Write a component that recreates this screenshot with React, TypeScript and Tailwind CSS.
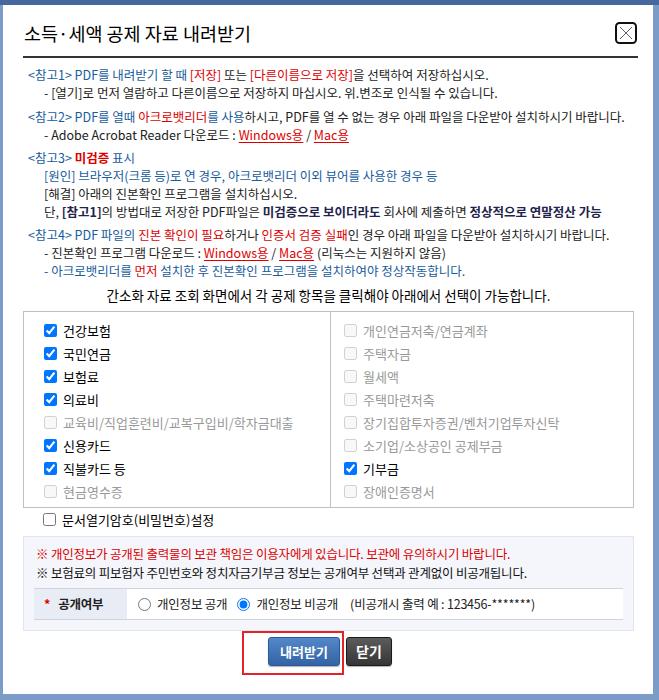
import React from 'react';

const Blue: React.FC<{ children: React.ReactNode }> = ({ children }) => (
  <span className="text-[#175c9d]">{children}</span>
);

const Red: React.FC<{ children: React.ReactNode; bold?: boolean }> = ({ children, bold }) => (
  <span className={`text-[#dd0000] ${bold ? 'font-bold' : ''}`}>{children}</span>
);

const Strong: React.FC<{ children: React.ReactNode }> = ({ children }) => (
  <span className="font-bold text-[#22224a]">{children}</span>
);

const DownLink: React.FC<{ children: React.ReactNode }> = ({ children }) => (
  <a href="#" className="text-[#dd0000] underline underline-offset-2">{children}</a>
);

const CloseIcon = () => (
  <svg width="22" height="22" viewBox="0 0 22 22">
    <rect x="1" y="1" width="20" height="20" rx="3.5" fill="white" stroke="#111" strokeWidth="2" />
    <path d="M5 5L17 17M17 5L5 17" stroke="#5a5f7a" strokeWidth="1" />
  </svg>
);

type Item = { label: string; checked?: boolean; disabled?: boolean };

const leftItems: Item[] = [
  { label: '건강보험', checked: true },
  { label: '국민연금', checked: true },
  { label: '보험료', checked: true },
  { label: '의료비', checked: true },
  { label: '교육비/직업훈련비/교복구입비/학자금대출', disabled: true },
  { label: '신용카드', checked: true },
  { label: '직불카드 등', checked: true },
  { label: '현금영수증', disabled: true },
];

const rightItems: Item[] = [
  { label: '개인연금저축/연금계좌', disabled: true },
  { label: '주택자금', disabled: true },
  { label: '월세액', disabled: true },
  { label: '주택마련저축', disabled: true },
  { label: '장기집합투자증권/벤처기업투자신탁', disabled: true },
  { label: '소기업/소상공인 공제부금', disabled: true },
  { label: '기부금', checked: true },
  { label: '장애인증명서', disabled: true },
];

const CheckRow: React.FC<{ item: Item }> = ({ item }) => (
  <label className="flex items-center gap-[6px] h-[23px]">
    <input
      type="checkbox"
      defaultChecked={item.checked}
      disabled={item.disabled}
      className="m-0 w-[13px] h-[13px] shrink-0"
    />
    <span className={item.disabled ? 'text-[#999]' : 'text-black'}>{item.label}</span>
  </label>
);

export default function App() {
  return (
    <div className="h-[700px] bg-[#7b9bc8] border-t-[5px] border-[#45699f] pl-[3px] pr-[6px] font-['Noto_Sans_CJK_KR','Noto_Sans',sans-serif]">
      <div className="bg-white h-[689px]">
        {/* header */}
        <div className="ml-[20px] mr-[15px] h-[53px] pt-[5px] border-b-2 border-[#333] flex items-center justify-between">
          <h1 className="pl-[1px] text-[18.5px] leading-none text-black">소득·세액 공제 자료 내려받기</h1>
          <button className="mr-[1px]" aria-label="닫기">
            <CloseIcon />
          </button>
        </div>

        {/* notes */}
        <div className="pl-[25px] pt-[8px] text-[12.5px] leading-[18px] text-[#222] whitespace-nowrap">
          <div>
            <p>
              <Blue>&lt;참고1&gt; PDF를 내려받기 할 때 </Blue><Red>[저장]</Red> 또는 <Red>[다른이름으로 저장]</Red>을 선택하여 저장하십시오.
            </p>
            <p className="pl-[16px]">- [열기]로 먼저 열람하고 다른이름으로 저장하지 마십시오. 위.변조로 인식될 수 있습니다.</p>
          </div>
          <div className="mt-[6px]">
            <p>
              <Blue>&lt;참고2&gt; PDF를 열때 </Blue><Red>아크로뱃리더</Red><Blue>를 사용</Blue>하시고, PDF를 열 수 없는 경우 아래 파일을 다운받아 설치하시기 바랍니다.
            </p>
            <p className="pl-[16px]">
              - Adobe Acrobat Reader 다운로드 : <DownLink>Windows용</DownLink> / <DownLink>Mac용</DownLink>
            </p>
          </div>
          <div className="mt-[5px]">
            <p>
              <Blue>&lt;참고3&gt; </Blue><Red bold>미검증</Red><Blue> 표시</Blue>
            </p>
            <p className="pl-[16px]">
              <Blue>[원인] 브라우저(크롬 등)로 연 경우, 아크로뱃리더 이외 뷰어를 사용한 경우 등</Blue>
            </p>
            <p className="pl-[16px]">[해결] 아래의 진본확인 프로그램을 설치하십시오.</p>
            <p className="pl-[16px]">
              단, <Strong>[참고1]</Strong>의 방법대로 저장한 PDF파일은 <Strong>미검증으로 보이더라도</Strong> 회사에 제출하면 <Strong>정상적으로 연말정산 가능</Strong>
            </p>
          </div>
          <div className="mt-[5px]">
            <p>
              <Blue>&lt;참고4&gt; PDF 파일의 </Blue><Red>진본 확인이 필요</Red>하거나 <Red>인증서 검증 실패</Red>인 경우 아래 파일을 다운받아 설치하시기 바랍니다.
            </p>
            <p className="pl-[16px]">
              - 진본확인 프로그램 다운로드 : <DownLink>Windows용</DownLink> / <DownLink>Mac용</DownLink> (리눅스는 지원하지 않음)
            </p>
            <p className="pl-[16px]">
              <Blue>- 아크로뱃리더를 </Blue><Red>먼저</Red><Blue> 설치한 후 진본확인 프로그램을 설치하여야 정상작동합니다.</Blue>
            </p>
          </div>
        </div>

        <div className="ml-[20px] mr-[19px]">
          <p className="mt-[6px] text-center text-[13.5px] leading-[18px] text-black">
            간소화 자료 조회 화면에서 각 공제 항목을 클릭해야 아래에서 선택이 가능합니다.
          </p>

          {/* deduction items */}
          <div className="mt-[7px] border border-[#c0c0c0] grid grid-cols-[306px_1fr] text-[13px] leading-none">
            <div className="pl-[20px] pt-[7px] pb-[4px]">
              {leftItems.map(item => (
                <CheckRow key={item.label} item={item} />
              ))}
            </div>
            <div className="border-l border-[#c0c0c0] pl-[13px] pt-[7px] pb-[4px]">
              {rightItems.map(item => (
                <CheckRow key={item.label} item={item} />
              ))}
            </div>
          </div>

          <div className="pl-[20px] text-[13px] leading-none">
            <CheckRow item={{ label: '문서열기암호(비밀번호)설정' }} />
          </div>

          {/* privacy box */}
          <div className="mt-[5px] bg-[#f4f6fb] border border-[#dfe5ef] px-[10px] pt-[8px] pb-[10px] text-[12.5px] leading-[18px] tracking-[-0.2px] whitespace-nowrap">
            <p className="pl-[2px] text-[#dd0000]">※ 개인정보가 공개된 출력물의 보관 책임은 이용자에게 있습니다. 보관에 유의하시기 바랍니다.</p>
            <p className="pl-[2px] mt-[1px] text-[#111]">※ 보험료의 피보험자 주민번호와 정치자금기부금 정보는 공개여부 선택과 관계없이 비공개됩니다.</p>
            <div className="mt-[6px] flex h-[32px] border-y border-[#cfd3da]">
              <div className="w-[93px] bg-[#e8ecf4] flex items-center pl-[10px] font-bold text-[#222]">
                <span className="text-[#dd0000] mr-[8px]">*</span>공개여부
              </div>
              <div className="flex-1 bg-white flex items-center pl-[11px] text-[#222]">
                <label className="flex items-center gap-[6px]">
                  <input type="radio" name="open" className="m-0 w-[13px] h-[13px]" />
                  개인정보 공개
                </label>
                <label className="flex items-center gap-[6px] ml-[10px]">
                  <input type="radio" name="open" defaultChecked className="m-0 w-[13px] h-[13px]" />
                  개인정보 비공개
                </label>
                <span className="ml-[12px]">(비공개시 출력 예 : 123456-*******)</span>
              </div>
            </div>
          </div>
        </div>

        {/* buttons */}
        <div className="mt-[6px] pl-[4px] flex justify-center gap-[6px]">
          <div className="relative">
            <button className="w-[72px] h-[29px] rounded-[3px] border border-[#2d5a96] bg-gradient-to-b from-[#5388c8] to-[#3363a6] text-white text-[13px] font-bold shadow-[0_1px_1px_rgba(0,0,0,0.3)]">
              내려받기
            </button>
            <div className="absolute -left-[26px] -top-[6px] w-[102px] h-[44px] border-2 border-[#e52228] pointer-events-none" />
          </div>
          <button className="w-[46px] h-[29px] rounded-[3px] border border-[#1a1a1a] bg-gradient-to-b from-[#5c5c5c] to-[#363636] text-white text-[14px] font-bold shadow-[0_1px_1px_rgba(0,0,0,0.3)]">
            닫기
          </button>
        </div>
      </div>
    </div>
  );
}
